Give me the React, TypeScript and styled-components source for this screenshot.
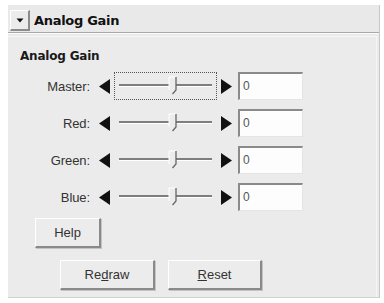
import styled, { createGlobalStyle } from "styled-components";

const GlobalStyle = createGlobalStyle`
  html, body {
    margin: 0;
    padding: 0;
    background: #ffffff;
  }
  body {
    font-family: "Liberation Sans", Arial, sans-serif;
  }
`;

const Window = styled.div`
  margin: 5px 0 0 8px;
  width: 372px;
  height: 293px;
  background: #ebebeb;
  display: flex;
  flex-direction: column;
  box-sizing: border-box;
  border-right: 1px solid #c8c8c8;
  border-bottom: 1px solid #d0d0d0;
`;

const Header = styled.div`
  height: 27px;
  display: flex;
  align-items: center;
  padding-left: 2px;
  gap: 4px;
  background: #e9e9e9;
  border-bottom: 1px solid #a9a9a9;
  box-shadow: 0 1px 0 #fbfbfb;
`;

const Toggle = styled.div`
  width: 20px;
  height: 21px;
  margin-top: 4px;
  box-sizing: border-box;
  display: flex;
  align-items: center;
  justify-content: center;
  border-top: 1px solid #ffffff;
  border-left: 1px solid #ffffff;
  border-right: 2px solid #8c8c8c;
  border-bottom: 2px solid #8c8c8c;
  background: #ececec;
`;

const HeaderTitle = styled.div`
  font-family: "DejaVu Sans", Verdana, sans-serif;
  font-weight: bold;
  font-size: 13px;
  letter-spacing: -0.3px;
  color: #111;
  margin-top: 3px;
`;

const Body = styled.div`
  flex: 1;
  margin: 3px 2px 0 0;
  padding: 12px 0 0 12px;
  border-top: 1px solid #f6f6f6;
  border-right: 1px solid #f6f6f6;
  display: flex;
  flex-direction: column;
`;

const SectionTitle = styled.div`
  font-family: "DejaVu Sans", Verdana, sans-serif;
  font-weight: bold;
  font-size: 12px;
  letter-spacing: -0.2px;
  color: #1a1a1a;
  height: 15px;
  line-height: 15px;
`;

const Rows = styled.div`
  margin-top: 8px;
  display: flex;
  flex-direction: column;
  gap: 9px;
`;

const Row = styled.div`
  height: 28px;
  display: flex;
  align-items: center;
`;

const Label = styled.div`
  width: 70px;
  text-align: right;
  font-size: 13px;
  color: #333;
  letter-spacing: -0.1px;
`;

const Arrow = styled.svg<{ $gapLeft: number }>`
  margin-left: ${(p) => p.$gapLeft}px;
  flex: none;
`;

const Track = styled.div<{ $focused?: boolean }>`
  margin-left: 4px;
  width: 103px;
  height: 28px;
  box-sizing: border-box;
  border: 1px dotted ${(p) => (p.$focused ? "#555" : "transparent")};
  display: flex;
  align-items: center;
`;

const ValueBox = styled.div`
  margin-left: 6px;
  width: 65px;
  height: 28px;
  box-sizing: border-box;
  background: #fdfdfd;
  border-top: 2px solid #8a8a8a;
  border-left: 2px solid #8a8a8a;
  border-right: 1px solid #e4e4e4;
  border-bottom: 1px solid #e4e4e4;
  font-size: 12px;
  color: #555;
  padding: 5px 0 0 3px;
`;

const Button = styled.div<{ $width: number; $left: number }>`
  width: ${(p) => p.$width}px;
  height: 30px;
  margin-left: ${(p) => p.$left}px;
  box-sizing: border-box;
  display: flex;
  align-items: center;
  justify-content: center;
  font-size: 13px;
  color: #333;
  background: #ececec;
  border-top: 1px solid #ffffff;
  border-left: 1px solid #ffffff;
  border-right: 2px solid #8a8a8a;
  border-bottom: 2px solid #8a8a8a;
  box-shadow: 1px 1px 0 #c4c4c4;
`;

const HelpWrap = styled.div`
  margin-top: 7px;
  display: flex;
`;

const ButtonRow = styled.div`
  margin-top: 12px;
  display: flex;
  gap: 13px;
`;

const Key = styled.span`
  text-decoration: underline;
`;

function SliderGraphic() {
  return (
    <svg width="101" height="26" viewBox="0 0 101 26">
      <line x1="4" y1="12" x2="97" y2="12" stroke="#7e7e7e" strokeWidth="2" />
      <line x1="4" y1="13.5" x2="97" y2="13.5" stroke="#ffffff" strokeWidth="1" />
      <path d="M54 4 H61 V17 L57.5 21 L54 17 Z" fill="#ececec" />
      <path d="M54 17 V4 H61" fill="none" stroke="#ffffff" strokeWidth="1" />
      <path d="M61 4 V17 L57.5 21" fill="none" stroke="#666" strokeWidth="1.3" />
    </svg>
  );
}

const channels = ["Master", "Red", "Green", "Blue"];

export default function App() {
  return (
    <>
      <GlobalStyle />
      <Window>
        <Header>
          <Toggle>
            <svg width="8" height="5" viewBox="0 0 8 5">
              <path d="M0.5 0.5 H7.5 L4 4.5 Z" fill="#111" />
            </svg>
          </Toggle>
          <HeaderTitle>Analog Gain</HeaderTitle>
        </Header>
        <Body>
          <SectionTitle>Analog Gain</SectionTitle>
          <Rows>
            {channels.map((name, i) => (
              <Row key={name}>
                <Label>{name}:</Label>
                <Arrow $gapLeft={9} width="11" height="15" viewBox="0 0 11 15">
                  <path d="M0 7.5 L11 0 V15 Z" fill="#111" />
                </Arrow>
                <Track $focused={i === 0}>
                  <SliderGraphic />
                </Track>
                <Arrow $gapLeft={4} width="11" height="15" viewBox="0 0 11 15">
                  <path d="M11 7.5 L0 0 V15 Z" fill="#111" />
                </Arrow>
                <ValueBox>0</ValueBox>
              </Row>
            ))}
          </Rows>
          <HelpWrap>
            <Button $width={66} $left={15}>Help</Button>
          </HelpWrap>
          <ButtonRow>
            <Button $width={95} $left={40}>
              <span>
                Re<Key>d</Key>raw
              </span>
            </Button>
            <Button $width={94} $left={0}>
              <span>
                <Key>R</Key>eset
              </span>
            </Button>
          </ButtonRow>
        </Body>
      </Window>
    </>
  );
}
